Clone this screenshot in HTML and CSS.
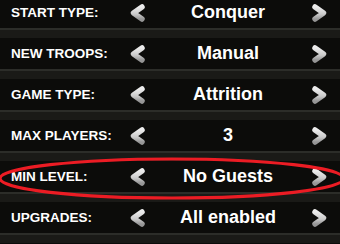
FILE: index.html
```html
<!DOCTYPE html>
<html>
<head>
<meta charset="utf-8">
<link rel="stylesheet" href="styles.css">
</head>
<body>
<svg class="defs" width="0" height="0">
  <defs>
    <linearGradient id="chev" x1="0" y1="0" x2="0" y2="1">
      <stop offset="0" stop-color="#ececec"/>
      <stop offset="0.6" stop-color="#cacaca"/>
      <stop offset="1" stop-color="#969696"/>
    </linearGradient>
  </defs>
</svg>
<div class="list">
  <div class="row">
    <span class="label">START TYPE:</span>
    <span class="arrow"><svg width="15" height="18" viewBox="0 0 15 18"><polyline points="12,3 3.5,9 12,15"/></svg></span>
    <span class="value">Conquer</span>
    <span class="arrow"><svg width="15" height="18" viewBox="0 0 15 18"><polyline points="3,3 11.5,9 3,15"/></svg></span>
  </div>
  <div class="sep"></div>
  <div class="row">
    <span class="label">NEW TROOPS:</span>
    <span class="arrow"><svg width="15" height="18" viewBox="0 0 15 18"><polyline points="12,3 3.5,9 12,15"/></svg></span>
    <span class="value">Manual</span>
    <span class="arrow"><svg width="15" height="18" viewBox="0 0 15 18"><polyline points="3,3 11.5,9 3,15"/></svg></span>
  </div>
  <div class="sep"></div>
  <div class="row">
    <span class="label">GAME TYPE:</span>
    <span class="arrow"><svg width="15" height="18" viewBox="0 0 15 18"><polyline points="12,3 3.5,9 12,15"/></svg></span>
    <span class="value">Attrition</span>
    <span class="arrow"><svg width="15" height="18" viewBox="0 0 15 18"><polyline points="3,3 11.5,9 3,15"/></svg></span>
  </div>
  <div class="sep"></div>
  <div class="row">
    <span class="label">MAX PLAYERS:</span>
    <span class="arrow"><svg width="15" height="18" viewBox="0 0 15 18"><polyline points="12,3 3.5,9 12,15"/></svg></span>
    <span class="value">3</span>
    <span class="arrow"><svg width="15" height="18" viewBox="0 0 15 18"><polyline points="3,3 11.5,9 3,15"/></svg></span>
  </div>
  <div class="sep"></div>
  <div class="row">
    <span class="label">MIN LEVEL:</span>
    <span class="arrow"><svg width="15" height="18" viewBox="0 0 15 18"><polyline points="12,3 3.5,9 12,15"/></svg></span>
    <span class="value">No Guests</span>
    <span class="arrow"><svg width="15" height="18" viewBox="0 0 15 18"><polyline points="3,3 11.5,9 3,15"/></svg></span>
  </div>
  <div class="sep"></div>
  <div class="row">
    <span class="label">UPGRADES:</span>
    <span class="arrow"><svg width="15" height="18" viewBox="0 0 15 18"><polyline points="12,3 3.5,9 12,15"/></svg></span>
    <span class="value">All enabled</span>
    <span class="arrow"><svg width="15" height="18" viewBox="0 0 15 18"><polyline points="3,3 11.5,9 3,15"/></svg></span>
  </div>
  <div class="sep"></div>
</div>
<svg class="mark" width="340" height="244" viewBox="0 0 340 244">
  <ellipse cx="172" cy="178.5" rx="172" ry="19.5"/>
</svg>
</body>
</html>
```

FILE: styles.css
```css
html, body {
  margin: 0;
  padding: 0;
  width: 340px;
  height: 244px;
  overflow: hidden;
  background: #0c0c0a;
}

body {
  position: relative;
  font-family: "Liberation Sans", Arial, sans-serif;
  color: #ffffff;
}

.defs {
  position: absolute;
}

.list {
  margin-top: -3px;
}

.row {
  display: grid;
  grid-template-columns: 126px 22px 160px 22px 1fr;
  align-items: center;
  height: 31px;
  background: #0c0c0a;
}

.label {
  padding-left: 11px;
  font-size: 13.5px;
  font-weight: bold;
  white-space: nowrap;
}

.value {
  text-align: center;
  font-size: 18px;
  font-weight: bold;
  white-space: nowrap;
}

.arrow {
  display: flex;
  justify-content: center;
  align-items: center;
}

.arrow svg {
  display: block;
}

.arrow polyline {
  fill: none;
  stroke: url(#chev);
  stroke-width: 5.5;
  stroke-linecap: round;
  stroke-linejoin: round;
}

.sep {
  height: 8px;
  border-top: 2px solid #2c2d29;
  background: #1a1a17;
}

.mark {
  position: absolute;
  left: 0;
  top: 0;
  pointer-events: none;
}

.mark ellipse {
  fill: none;
  stroke: #ec1c24;
  stroke-width: 3.2;
}
```
